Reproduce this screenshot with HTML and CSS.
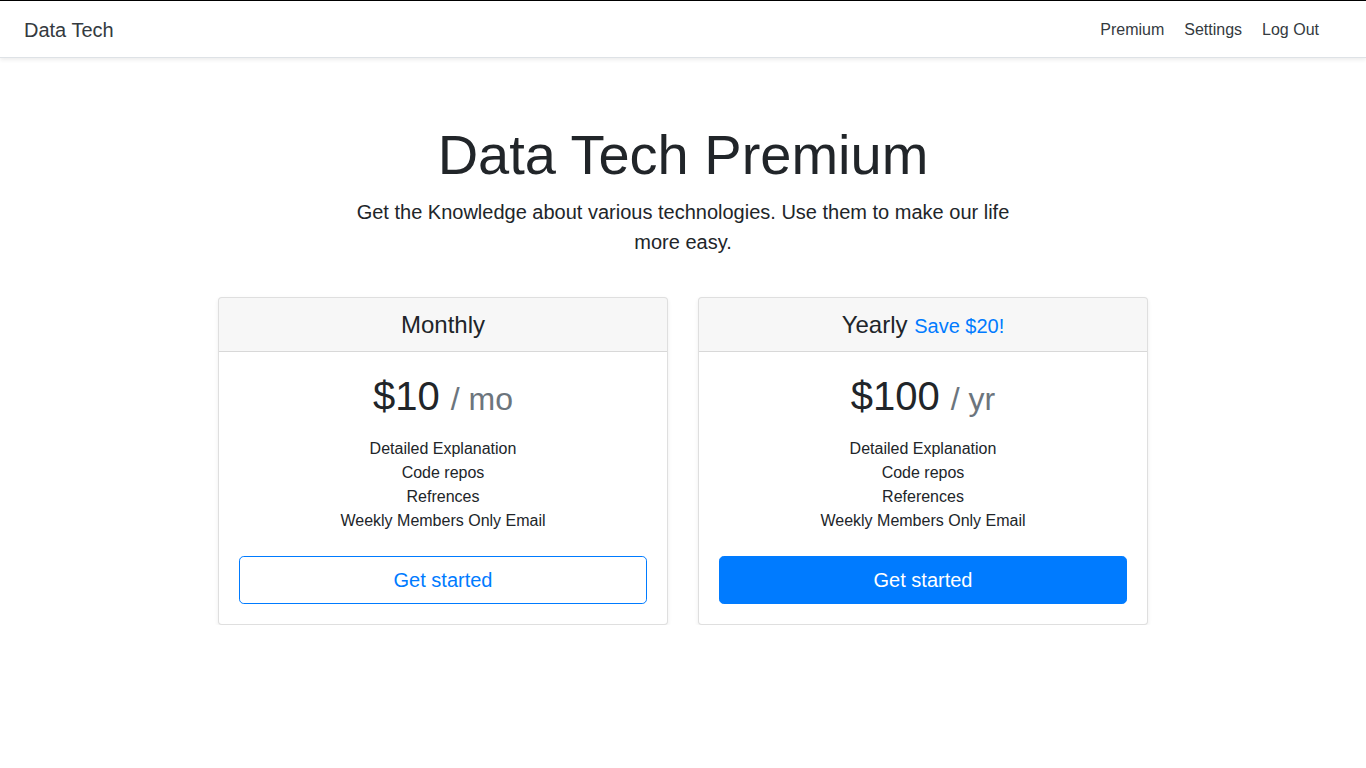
FILE: index.html
```html
<!DOCTYPE html>
<html lang="en">
<head>
<meta charset="utf-8">
<title>Data Tech Premium</title>
<link rel="stylesheet" href="styles.css">
</head>
<body>
<header class="topbar">
  <h5 class="brand">Data Tech</h5>
  <nav class="nav">
    <a class="nav-link" href="#">Premium</a>
    <a class="nav-link" href="#">Settings</a>
    <a class="nav-link" href="#">Log Out</a>
  </nav>
</header>

<section class="pricing-header">
  <h1 class="display">Data Tech Premium</h1>
  <p class="lead">Get the Knowledge about various technologies. Use them to make our life more easy.</p>
</section>

<main class="container">
  <div class="deck">
    <div class="card">
      <div class="card-header"><h4 class="plan">Monthly</h4></div>
      <div class="card-body">
        <h1 class="price">$10 <small class="muted">/ mo</small></h1>
        <ul class="features">
          <li>Detailed Explanation</li>
          <li>Code repos</li>
          <li>Refrences</li>
          <li>Weekly Members Only Email</li>
        </ul>
        <button class="btn btn-outline" type="button">Get started</button>
      </div>
    </div>
    <div class="card">
      <div class="card-header"><h4 class="plan">Yearly <span class="save">Save $20!</span></h4></div>
      <div class="card-body">
        <h1 class="price">$100 <small class="muted">/ yr</small></h1>
        <ul class="features">
          <li>Detailed Explanation</li>
          <li>Code repos</li>
          <li>References</li>
          <li>Weekly Members Only Email</li>
        </ul>
        <button class="btn btn-primary" type="button">Get started</button>
      </div>
    </div>
  </div>
</main>
</body>
</html>
```

FILE: styles.css
```css
* { box-sizing: border-box; }

html, body {
  margin: 0;
  padding: 0;
}

body {
  font-family: "Liberation Sans", Arial, sans-serif;
  font-size: 16px;
  line-height: 1.5;
  color: #212529;
  background: #fff;
  border-top: 1px solid #000;
}

.topbar {
  display: flex;
  align-items: center;
  padding: 17px 24px 15px;
  background: #fff;
  border-bottom: 1px solid #dee2e6;
  box-shadow: 0 2px 4px rgba(0, 0, 0, 0.075);
  margin-bottom: 16px;
}

.brand {
  margin: 0 auto 0 0;
  font-size: 20px;
  font-weight: 400;
  line-height: 1.2;
  color: #343a40;
}

.nav {
  display: flex;
  margin-right: 13px;
}

.nav-link {
  padding: 0 10px;
  color: #343a40;
  text-decoration: none;
  line-height: 24px;
}

.pricing-header {
  max-width: 700px;
  margin: 0 auto;
  padding: 47px 16px 24px;
  text-align: center;
}

.display {
  margin: 0 0 9px;
  font-size: 56px;
  font-weight: 300;
  line-height: 1.2;
}

.lead {
  margin: 0 0 16px;
  font-size: 20px;
  font-weight: 300;
  line-height: 1.5;
}

.container {
  max-width: 960px;
  margin: 0 auto;
  padding: 0 15px;
}

.deck {
  display: flex;
  gap: 30px;
  text-align: center;
}

.card {
  flex: 1 1 0;
  border: 1px solid rgba(0, 0, 0, 0.125);
  border-radius: 4px;
  box-shadow: 0 2px 4px rgba(0, 0, 0, 0.075);
  background: #fff;
  display: flex;
  flex-direction: column;
}

.card-header {
  padding: 13px 20px 11px;
  background: rgba(0, 0, 0, 0.03);
  border-bottom: 1px solid rgba(0, 0, 0, 0.125);
  border-radius: 3px 3px 0 0;
}

.plan {
  margin: 0;
  font-size: 24px;
  font-weight: 400;
  line-height: 1.2;
}

.save {
  color: #007bff;
  font-size: 20px;
}

.card-body {
  padding: 20px;
}

.price {
  margin: 0;
  font-size: 40px;
  font-weight: 400;
  line-height: 1.2;
}

.muted {
  color: #6c757d;
  font-size: 80%;
  font-weight: 400;
}

.features {
  list-style: none;
  margin: 17px 0 23px;
  padding: 0;
}

.btn {
  display: block;
  width: 100%;
  height: 48px;
  padding: 8px 16px;
  font-family: inherit;
  font-size: 20px;
  line-height: 1.5;
  border-radius: 4.8px;
  cursor: pointer;
}

.btn-outline {
  color: #007bff;
  background: transparent;
  border: 1px solid #007bff;
}

.btn-primary {
  color: #fff;
  background: #007bff;
  border: 1px solid #007bff;
}
```
